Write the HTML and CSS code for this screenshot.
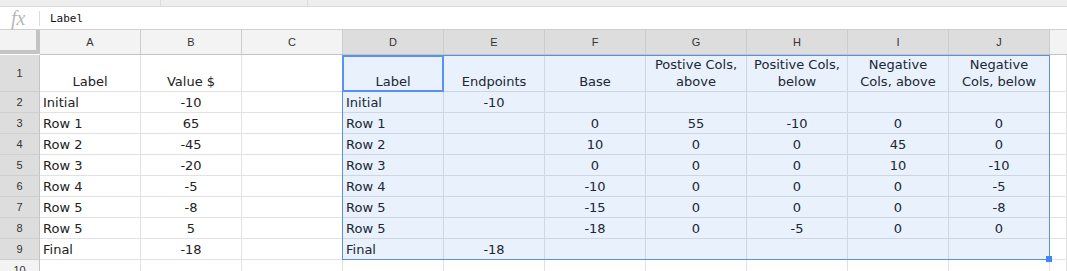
FILE: index.html
```html
<!DOCTYPE html>
<html lang="en">
<head>
    <meta charset="UTF-8">
    <meta name="viewport" content="width=device-width, initial-scale=1.0">
    <title>Waterfall data</title>
    <link rel="stylesheet" href="styles.css">
</head>
<body>
    <div class="strip">
        <div class="strip-part w1"></div>
        <div class="strip-part w2"></div>
    </div>

    <div class="fx-bar">
        <span class="fx">fx</span>
        <span class="fx-sep"></span>
        <span class="fx-value">Label</span>
    </div>

    <div class="sheet">
        <!-- column headers -->
        <div class="corner"></div>
        <div class="colhead">A</div>
        <div class="colhead">B</div>
        <div class="colhead">C</div>
        <div class="colhead on">D</div>
        <div class="colhead on">E</div>
        <div class="colhead on">F</div>
        <div class="colhead on">G</div>
        <div class="colhead on">H</div>
        <div class="colhead on">I</div>
        <div class="colhead on">J</div>
        <div class="colhead last"></div>

        <!-- row 1 -->
        <div class="rowhead on">1</div>
        <div class="cell c">Label</div>
        <div class="cell c">Value $</div>
        <div class="cell"></div>
        <div class="cell c">Label</div>
        <div class="cell c">Endpoints</div>
        <div class="cell c">Base</div>
        <div class="cell c wrap">Postive Cols,<br>above</div>
        <div class="cell c wrap">Positive Cols,<br>below</div>
        <div class="cell c wrap">Negative<br>Cols, above</div>
        <div class="cell c wrap">Negative<br>Cols, below</div>
        <div class="cell"></div>

        <!-- row 2 -->
        <div class="rowhead on">2</div>
        <div class="cell">Initial</div>
        <div class="cell c">-10</div>
        <div class="cell"></div>
        <div class="cell">Initial</div>
        <div class="cell c">-10</div>
        <div class="cell"></div>
        <div class="cell"></div>
        <div class="cell"></div>
        <div class="cell"></div>
        <div class="cell"></div>
        <div class="cell"></div>

        <!-- row 3 -->
        <div class="rowhead on">3</div>
        <div class="cell">Row 1</div>
        <div class="cell c">65</div>
        <div class="cell"></div>
        <div class="cell">Row 1</div>
        <div class="cell"></div>
        <div class="cell c">0</div>
        <div class="cell c">55</div>
        <div class="cell c">-10</div>
        <div class="cell c">0</div>
        <div class="cell c">0</div>
        <div class="cell"></div>

        <!-- row 4 -->
        <div class="rowhead on">4</div>
        <div class="cell">Row 2</div>
        <div class="cell c">-45</div>
        <div class="cell"></div>
        <div class="cell">Row 2</div>
        <div class="cell"></div>
        <div class="cell c">10</div>
        <div class="cell c">0</div>
        <div class="cell c">0</div>
        <div class="cell c">45</div>
        <div class="cell c">0</div>
        <div class="cell"></div>

        <!-- row 5 -->
        <div class="rowhead on">5</div>
        <div class="cell">Row 3</div>
        <div class="cell c">-20</div>
        <div class="cell"></div>
        <div class="cell">Row 3</div>
        <div class="cell"></div>
        <div class="cell c">0</div>
        <div class="cell c">0</div>
        <div class="cell c">0</div>
        <div class="cell c">10</div>
        <div class="cell c">-10</div>
        <div class="cell"></div>

        <!-- row 6 -->
        <div class="rowhead on">6</div>
        <div class="cell">Row 4</div>
        <div class="cell c">-5</div>
        <div class="cell"></div>
        <div class="cell">Row 4</div>
        <div class="cell"></div>
        <div class="cell c">-10</div>
        <div class="cell c">0</div>
        <div class="cell c">0</div>
        <div class="cell c">0</div>
        <div class="cell c">-5</div>
        <div class="cell"></div>

        <!-- row 7 -->
        <div class="rowhead on">7</div>
        <div class="cell">Row 5</div>
        <div class="cell c">-8</div>
        <div class="cell"></div>
        <div class="cell">Row 5</div>
        <div class="cell"></div>
        <div class="cell c">-15</div>
        <div class="cell c">0</div>
        <div class="cell c">0</div>
        <div class="cell c">0</div>
        <div class="cell c">-8</div>
        <div class="cell"></div>

        <!-- row 8 -->
        <div class="rowhead on">8</div>
        <div class="cell">Row 5</div>
        <div class="cell c">5</div>
        <div class="cell"></div>
        <div class="cell">Row 5</div>
        <div class="cell"></div>
        <div class="cell c">-18</div>
        <div class="cell c">0</div>
        <div class="cell c">-5</div>
        <div class="cell c">0</div>
        <div class="cell c">0</div>
        <div class="cell"></div>

        <!-- row 9 -->
        <div class="rowhead on">9</div>
        <div class="cell">Final</div>
        <div class="cell c">-18</div>
        <div class="cell"></div>
        <div class="cell">Final</div>
        <div class="cell c">-18</div>
        <div class="cell"></div>
        <div class="cell"></div>
        <div class="cell"></div>
        <div class="cell"></div>
        <div class="cell"></div>
        <div class="cell"></div>

        <!-- row 10 -->
        <div class="rowhead">10</div>
        <div class="cell"></div>
        <div class="cell"></div>
        <div class="cell"></div>
        <div class="cell"></div>
        <div class="cell"></div>
        <div class="cell"></div>
        <div class="cell"></div>
        <div class="cell"></div>
        <div class="cell"></div>
        <div class="cell"></div>
        <div class="cell"></div>

        <!-- selection D1:J9 -->
        <div class="selection"></div>
        <div class="active-cell"></div>
        <div class="fill-handle"></div>
    </div>
</body>
</html>
```

FILE: styles.css
```css
body {
    margin: 0;
    background: #fff;
    font-family: "DejaVu Sans", Verdana, sans-serif;
    color: #222;
    overflow: hidden;
}

/* bit of the toolbar that is cut off at the top */
.strip {
    display: flex;
    height: 6px;
    background: #eeeeee;
    border-bottom: 1px solid #d9d9d9;
}
.strip-part {
    height: 6px;
    border-right: 1px solid #dcdcdc;
}
.w1 { width: 160px; }
.w2 { width: 146px; }

/* formula bar */
.fx-bar {
    display: flex;
    align-items: center;
    height: 22px;
    border-bottom: 1px solid #cfcfcf;
}
.fx {
    width: 39px;
    padding-left: 11px;
    box-sizing: border-box;
    font-family: "Liberation Serif", serif;
    font-style: italic;
    font-size: 20px;
    line-height: 20px;
    color: #b8b8b8;
}
.fx-sep {
    width: 1px;
    height: 15px;
    background: #dcdcdc;
}
.fx-value {
    margin-left: 10px;
    font-family: "DejaVu Sans Mono", monospace;
    font-size: 11px;
    color: #111;
}

/* the grid */
.sheet {
    position: relative;
    display: grid;
    grid-template-columns: 40px repeat(10, 101px) 1fr;
    grid-template-rows: 25px 37px;
    grid-auto-rows: 21px;
    font-size: 13px;
}

.corner {
    background: #f3f3f3;
    border-right: 4px solid #c4c4c4;
    border-bottom: 4px solid #c4c4c4;
    box-sizing: border-box;
    margin: 0 0 1px 0;
}

.colhead,
.rowhead {
    display: flex;
    align-items: center;
    justify-content: center;
    box-sizing: border-box;
    background: #f3f3f3;
    font-family: "Liberation Sans", Arial, sans-serif;
    font-size: 11px;
    color: #333;
    border-right: 1px solid #cccccc;
    border-bottom: 1px solid #c4c4c4;
}
.colhead.on,
.rowhead.on {
    background: #dddddd;
}
.colhead.last {
    border-right: none;
}
.rowhead {
    border-bottom-color: #cfcfcf;
    border-right-color: #c4c4c4;
}

.cell {
    display: flex;
    align-items: flex-end;
    box-sizing: border-box;
    padding: 0 3px 1px;
    line-height: 17px;
    white-space: nowrap;
    overflow: hidden;
    border-right: 1px solid #e2e2e2;
    border-bottom: 1px solid #e2e2e2;
}
.cell.c {
    justify-content: center;
    text-align: center;
}
.cell.wrap {
    white-space: normal;
}

/* highlighted range and active cell drawn over the cells */
.selection {
    position: absolute;
    left: 342px;
    top: 25px;
    width: 708px;
    height: 205px;
    box-sizing: border-box;
    border: 1px solid #5b8fe6;
    background: rgba(14, 101, 235, 0.09);
    pointer-events: none;
}
.active-cell {
    position: absolute;
    left: 342px;
    top: 25px;
    width: 102px;
    height: 37px;
    box-sizing: border-box;
    border: 2px solid #5592f3;
}
.fill-handle {
    position: absolute;
    left: 1046px;
    top: 226px;
    width: 6px;
    height: 6px;
    background: #4285f4;
}
```
